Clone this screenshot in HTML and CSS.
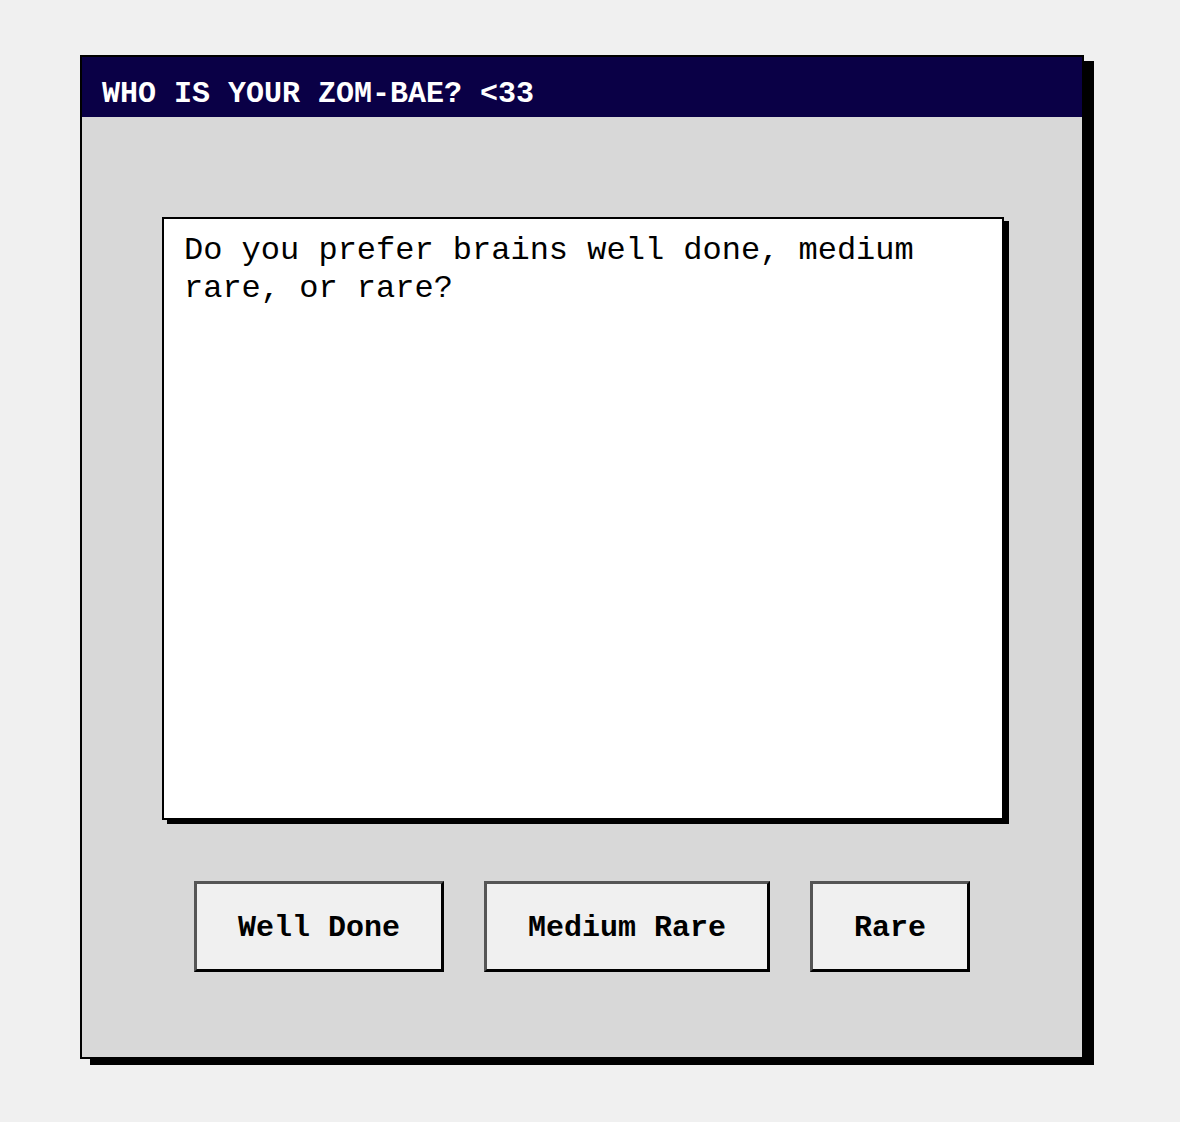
FILE: index.html
```html
<!DOCTYPE html>
<html lang="en">
<head>
<meta charset="utf-8">
<title>Who is your Zom-Bae?</title>
<link rel="stylesheet" href="styles.css">
</head>
<body>
  <div class="window">
    <div class="titlebar">WHO IS YOUR ZOM-BAE? &lt;33</div>
    <div class="content">
      <div class="question">Do you prefer brains well done, medium rare, or rare?</div>
      <div class="buttons">
        <button class="btn">Well Done</button>
        <button class="btn">Medium Rare</button>
        <button class="btn">Rare</button>
      </div>
    </div>
  </div>
</body>
</html>
```

FILE: styles.css
```css
* {
  box-sizing: border-box;
}

html, body {
  margin: 0;
  padding: 0;
  background: #f0f0f0;
}

body {
  font-family: "Liberation Mono", "Courier New", monospace;
  padding: 55px 0 0 80px;
  height: 1122px;
}

.window {
  width: 1004px;
  height: 1004px;
  background: #d8d8d8;
  border: 2px solid #000;
  box-shadow: 10px 6px 0 #000;
  display: flex;
  flex-direction: column;
}

.titlebar {
  background: #0a0046;
  color: #fff;
  font-weight: bold;
  font-size: 30px;
  line-height: 34px;
  height: 60px;
  padding: 20px 20px 6px;
  white-space: pre;
}

.content {
  padding-top: 100px;
}

.question {
  margin-left: 80px;
  width: 842px;
  height: 603px;
  background: #fff;
  border: 2px solid #000;
  box-shadow: 5px 4px 0 #000;
  padding: 13px 20px;
  font-size: 32px;
  line-height: 38px;
  color: #000;
}

.buttons {
  display: flex;
  justify-content: center;
  gap: 40px;
  margin-top: 61px;
}

.btn {
  font-family: "Liberation Mono", "Courier New", monospace;
  font-weight: bold;
  font-size: 30px;
  line-height: 34px;
  padding: 27px 41px 24px;
  background: #f0f0f0;
  color: #000;
  border: 3px solid;
  border-color: #555 #000 #000 #555;
  border-radius: 0;
  margin: 0;
}
```
